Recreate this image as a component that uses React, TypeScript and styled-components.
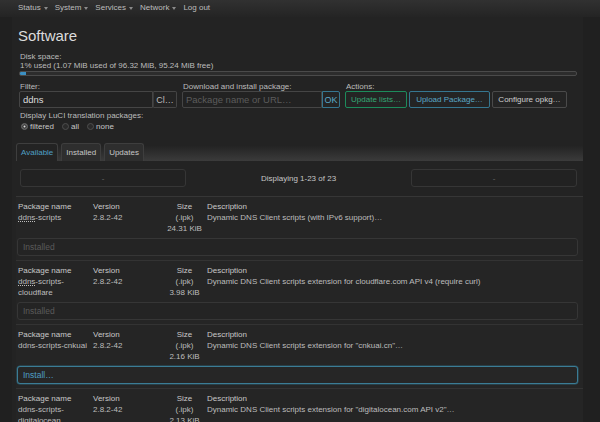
import React from "react";
import styled, { createGlobalStyle, css } from "styled-components";

const Global = createGlobalStyle`
  html, body { margin: 0; padding: 0; background: #202020; }
  body {
    font-family: "Liberation Sans", Arial, sans-serif;
    font-size: 8px;
    color: #c6c6c6;
    width: 600px;
    height: 422px;
    overflow: hidden;
  }
  * { box-sizing: border-box; }
`;

const NavBar = styled.header`
  height: 17px;
  background: linear-gradient(#313131, #242424);
  display: flex;
  align-items: center;
  gap: 7px;
  padding-left: 18px;
  padding-bottom: 1px;
  color: #bdbdbd;
  line-height: 10px;
`;

const NavItem = styled.span`
  display: inline-flex;
  align-items: center;
  gap: 3px;
`;

const Caret = styled.span`
  width: 0;
  height: 0;
  border-left: 2px solid transparent;
  border-right: 2px solid transparent;
  border-top: 3px solid #8a8a8a;
  margin-top: 1px;
`;

const Main = styled.main`
  margin-left: 12px;
  width: 571px;
  padding-left: 4px;
  background: #232323;
  min-height: 405px;
`;

const Title = styled.h2`
  margin: 0;
  padding: 10px 0 0 2px;
  height: 28px;
  font-size: 15px;
  line-height: 18px;
  font-weight: normal;
  color: #dcdcdc;
`;

const Section = styled.section`
  padding: 0 6px 0 3px;
`;

const Label = styled.div`
  margin-left: 1px;
  line-height: 9px;
  height: 9px;
  color: #bcbcbc;
  white-space: nowrap;
`;

const DiskWrap = styled.div`
  padding-top: 7px;
  display: flex;
  flex-direction: column;
`;

const Bar = styled.div`
  margin-top: 1px;
  height: 5px;
  border: 1px solid #4a4a4a;
  border-radius: 2px;
  background: #2c2c2c;
  overflow: hidden;
`;

const BarFill = styled.div`
  height: 100%;
  background: #3b8fc2;
`;

const Controls = styled.div`
  margin-top: 6px;
  display: flex;
  gap: 5px;
`;

const Group = styled.div`
  display: flex;
  flex-direction: column;
`;

const Inline = styled.div<{ $gap?: number }>`
  display: flex;
  gap: ${(p) => p.$gap ?? 0}px;
`;

const Input = styled.div<{ $w: number; $placeholder?: boolean }>`
  width: ${(p) => p.$w}px;
  height: 17px;
  border: 1px solid #454545;
  background: #222;
  border-radius: 2px 0 0 2px;
  padding-left: 3px;
  display: flex;
  align-items: center;
  font-size: 9.5px;
  color: ${(p) => (p.$placeholder ? "#5c5c5c" : "#dcdcdc")};
  white-space: nowrap;
  overflow: hidden;
`;

type Tone = "plain" | "green" | "blue" | "joined" | "joinedBlue";

const Btn = styled.div<{ $w: number; $tone: Tone }>`
  width: ${(p) => p.$w}px;
  height: 17px;
  border-radius: 2px;
  background: #242424;
  display: flex;
  align-items: center;
  justify-content: center;
  white-space: nowrap;
  font-size: 8px;
  ${(p) =>
    p.$tone === "green"
      ? css`border: 1px solid #1d8a5b; color: #34a874;`
      : p.$tone === "blue"
      ? css`border: 1px solid #36768f; color: #5aa8c8;`
      : p.$tone === "joinedBlue"
      ? css`border: 1px solid #36768f; color: #5aa8c8; border-radius: 0 2px 2px 0; font-size: 9px;`
      : p.$tone === "joined"
      ? css`border: 1px solid #454545; border-left: 1px solid #3a3a3a; color: #bcbcbc; border-radius: 0 2px 2px 0; font-size: 9px;`
      : css`border: 1px solid #4a4a4a; color: #cfcfcf;`}
`;

const TransWrap = styled.div`
  margin-top: 3px;
  display: flex;
  flex-direction: column;
  gap: 1px;
`;

const Radios = styled.div`
  display: flex;
  gap: 8px;
  margin-left: 2px;
  height: 10px;
  align-items: center;
  color: #c6c6c6;
`;

const RadioItem = styled.span`
  display: inline-flex;
  align-items: center;
  gap: 2px;
`;

const RadioDot = styled.span<{ $on?: boolean }>`
  width: 7px;
  height: 7px;
  border-radius: 50%;
  border: 1px solid #4e4e4e;
  background: ${(p) => (p.$on ? "#e0e0e0" : "#2b2b2b")};
  box-shadow: ${(p) => (p.$on ? "inset 0 0 0 1.5px #3a3a3a" : "none")};
`;

const TabBar = styled.div`
  margin-top: 12px;
  height: 18px;
  display: flex;
  gap: 3px;
  background: linear-gradient(#232323 15%, #3b3b3b);
`;

const Tab = styled.div<{ $active?: boolean }>`
  height: 18px;
  padding: 0 4px;
  display: flex;
  align-items: center;
  border: 1px solid #3e3e3e;
  border-bottom: none;
  border-radius: 3px 3px 0 0;
  font-size: 8px;
  background: ${(p) => (p.$active ? "#232323" : "#2e2e2e")};
  color: ${(p) => (p.$active ? "#4f9fc4" : "#c6c6c6")};
`;

const Pager = styled.div`
  margin-top: 8px;
  padding: 0 6px 0 4px;
  display: flex;
  align-items: center;
  justify-content: space-between;
  height: 18px;
`;

const PageBtn = styled.div`
  width: 166px;
  height: 18px;
  border: 1px solid #363636;
  border-radius: 3px;
  background: #222;
  display: flex;
  align-items: center;
  justify-content: center;
  color: #6a6a6a;
  font-size: 8px;
`;

const PagerText = styled.span`
  color: #c6c6c6;
`;

const List = styled.div`
  margin-top: 9px;
  border-top: 1px solid #363636;
`;

const Block = styled.div<{ $first?: boolean }>`
  padding: 4px 5px 4px 1px;
  border-top: ${(p) => (p.$first ? "none" : "1px solid #333")};
  background: #252525;
`;

const Row = styled.div`
  display: grid;
  grid-template-columns: 75px 70px 44px 1fr;
  line-height: 11px;
`;

const Cell = styled.div<{ $center?: boolean }>`
  padding-left: 1px;
  display: flex;
  flex-direction: column;
  text-align: ${(p) => (p.$center ? "center" : "left")};
  color: #bdbdbd;
`;

const Head = styled.span`
  color: #c8c8c8;
`;

const Desc = styled.span`
  white-space: nowrap;
  overflow: hidden;
`;

const Match = styled.span`
  text-decoration: underline dotted;
  text-underline-offset: 1px;
`;

const Action = styled.div<{ $install?: boolean }>`
  margin-top: 4px;
  height: 18px;
  border-radius: 3px;
  padding-left: 5px;
  display: flex;
  align-items: center;
  font-size: 8.5px;
  ${(p) =>
    p.$install
      ? css`border: 1px solid #3b7c95; box-shadow: 0 0 0 0.5px #2c5a6b; color: #4f9fc4; background: #262626;`
      : css`border: 1px solid #363636; color: #5a5a5a; background: #242424;`}
`;

type Pkg = {
  name: string[];
  match?: boolean;
  size: string;
  desc: string;
  installed: boolean;
};

const pkgs: Pkg[] = [
  { name: ["ddns-scripts"], match: true, size: "24.31 KiB", desc: "Dynamic DNS Client scripts (with IPv6 support)…", installed: true },
  { name: ["ddns-scripts-", "cloudflare"], match: true, size: "3.98 KiB", desc: "Dynamic DNS Client scripts extension for cloudflare.com API v4 (require curl)", installed: true },
  { name: ["ddns-scripts-cnkuai"], size: "2.16 KiB", desc: "Dynamic DNS Client scripts extension for \"cnkuai.cn\"…", installed: false },
  { name: ["ddns-scripts-", "digitalocean"], size: "2.13 KiB", desc: "Dynamic DNS Client scripts extension for \"digitalocean.com API v2\"…", installed: false },
];

function PkgName({ p }: { p: Pkg }) {
  return (
    <>
      {p.name.map((line, i) =>
        i === 0 && p.match ? (
          <span key={i}>
            <Match>ddns</Match>
            {line.slice(4)}
          </span>
        ) : (
          <span key={i}>{line}</span>
        )
      )}
    </>
  );
}

export default function App() {
  return (
    <>
      <Global />
      <NavBar>
        {["Status", "System", "Services", "Network"].map((n) => (
          <NavItem key={n}>
            {n}
            <Caret />
          </NavItem>
        ))}
        <NavItem>Log out</NavItem>
      </NavBar>
      <Main>
        <Title>Software</Title>
        <Section>
          <DiskWrap>
            <Label>Disk space:</Label>
            <Label>1% used (1.07 MiB used of 96.32 MiB, 95.24 MiB free)</Label>
            <Bar>
              <BarFill style={{ width: "1.1%" }} />
            </Bar>
          </DiskWrap>
          <Controls>
            <Group>
              <Label>Filter:</Label>
              <Inline>
                <Input $w={134}>ddns</Input>
                <Btn $w={24} $tone="joined">Cl…</Btn>
              </Inline>
            </Group>
            <Group>
              <Label>Download and install package:</Label>
              <Inline>
                <Input $w={140} $placeholder>Package name or URL…</Input>
                <Btn $w={18} $tone="joinedBlue">OK</Btn>
              </Inline>
            </Group>
            <Group>
              <Label>Actions:</Label>
              <Inline $gap={2}>
                <Btn $w={62} $tone="green">Update lists…</Btn>
                <Btn $w={81} $tone="blue">Upload Package…</Btn>
                <Btn $w={75} $tone="plain">Configure opkg…</Btn>
              </Inline>
            </Group>
          </Controls>
          <TransWrap>
            <Label>Display LuCI translation packages:</Label>
            <Radios>
              <RadioItem><RadioDot $on />filtered</RadioItem>
              <RadioItem><RadioDot />all</RadioItem>
              <RadioItem><RadioDot />none</RadioItem>
            </Radios>
          </TransWrap>
        </Section>
        <TabBar>
          <Tab $active>Available</Tab>
          <Tab>Installed</Tab>
          <Tab>Updates</Tab>
        </TabBar>
        <Pager>
          <PageBtn>-</PageBtn>
          <PagerText>Displaying 1-23 of 23</PagerText>
          <PageBtn>-</PageBtn>
        </Pager>
        <List>
          {pkgs.map((p, i) => (
            <Block key={i} $first={i === 0}>
              <Row>
                <Cell>
                  <Head>Package name</Head>
                  <PkgName p={p} />
                </Cell>
                <Cell>
                  <Head>Version</Head>
                  <span>2.8.2-42</span>
                </Cell>
                <Cell $center>
                  <Head>Size</Head>
                  <span>(.ipk)</span>
                  <span>{p.size}</span>
                </Cell>
                <Cell>
                  <Head>Description</Head>
                  <Desc>{p.desc}</Desc>
                </Cell>
              </Row>
              <Action $install={!p.installed}>{p.installed ? "Installed" : "Install…"}</Action>
            </Block>
          ))}
        </List>
      </Main>
    </>
  );
}
